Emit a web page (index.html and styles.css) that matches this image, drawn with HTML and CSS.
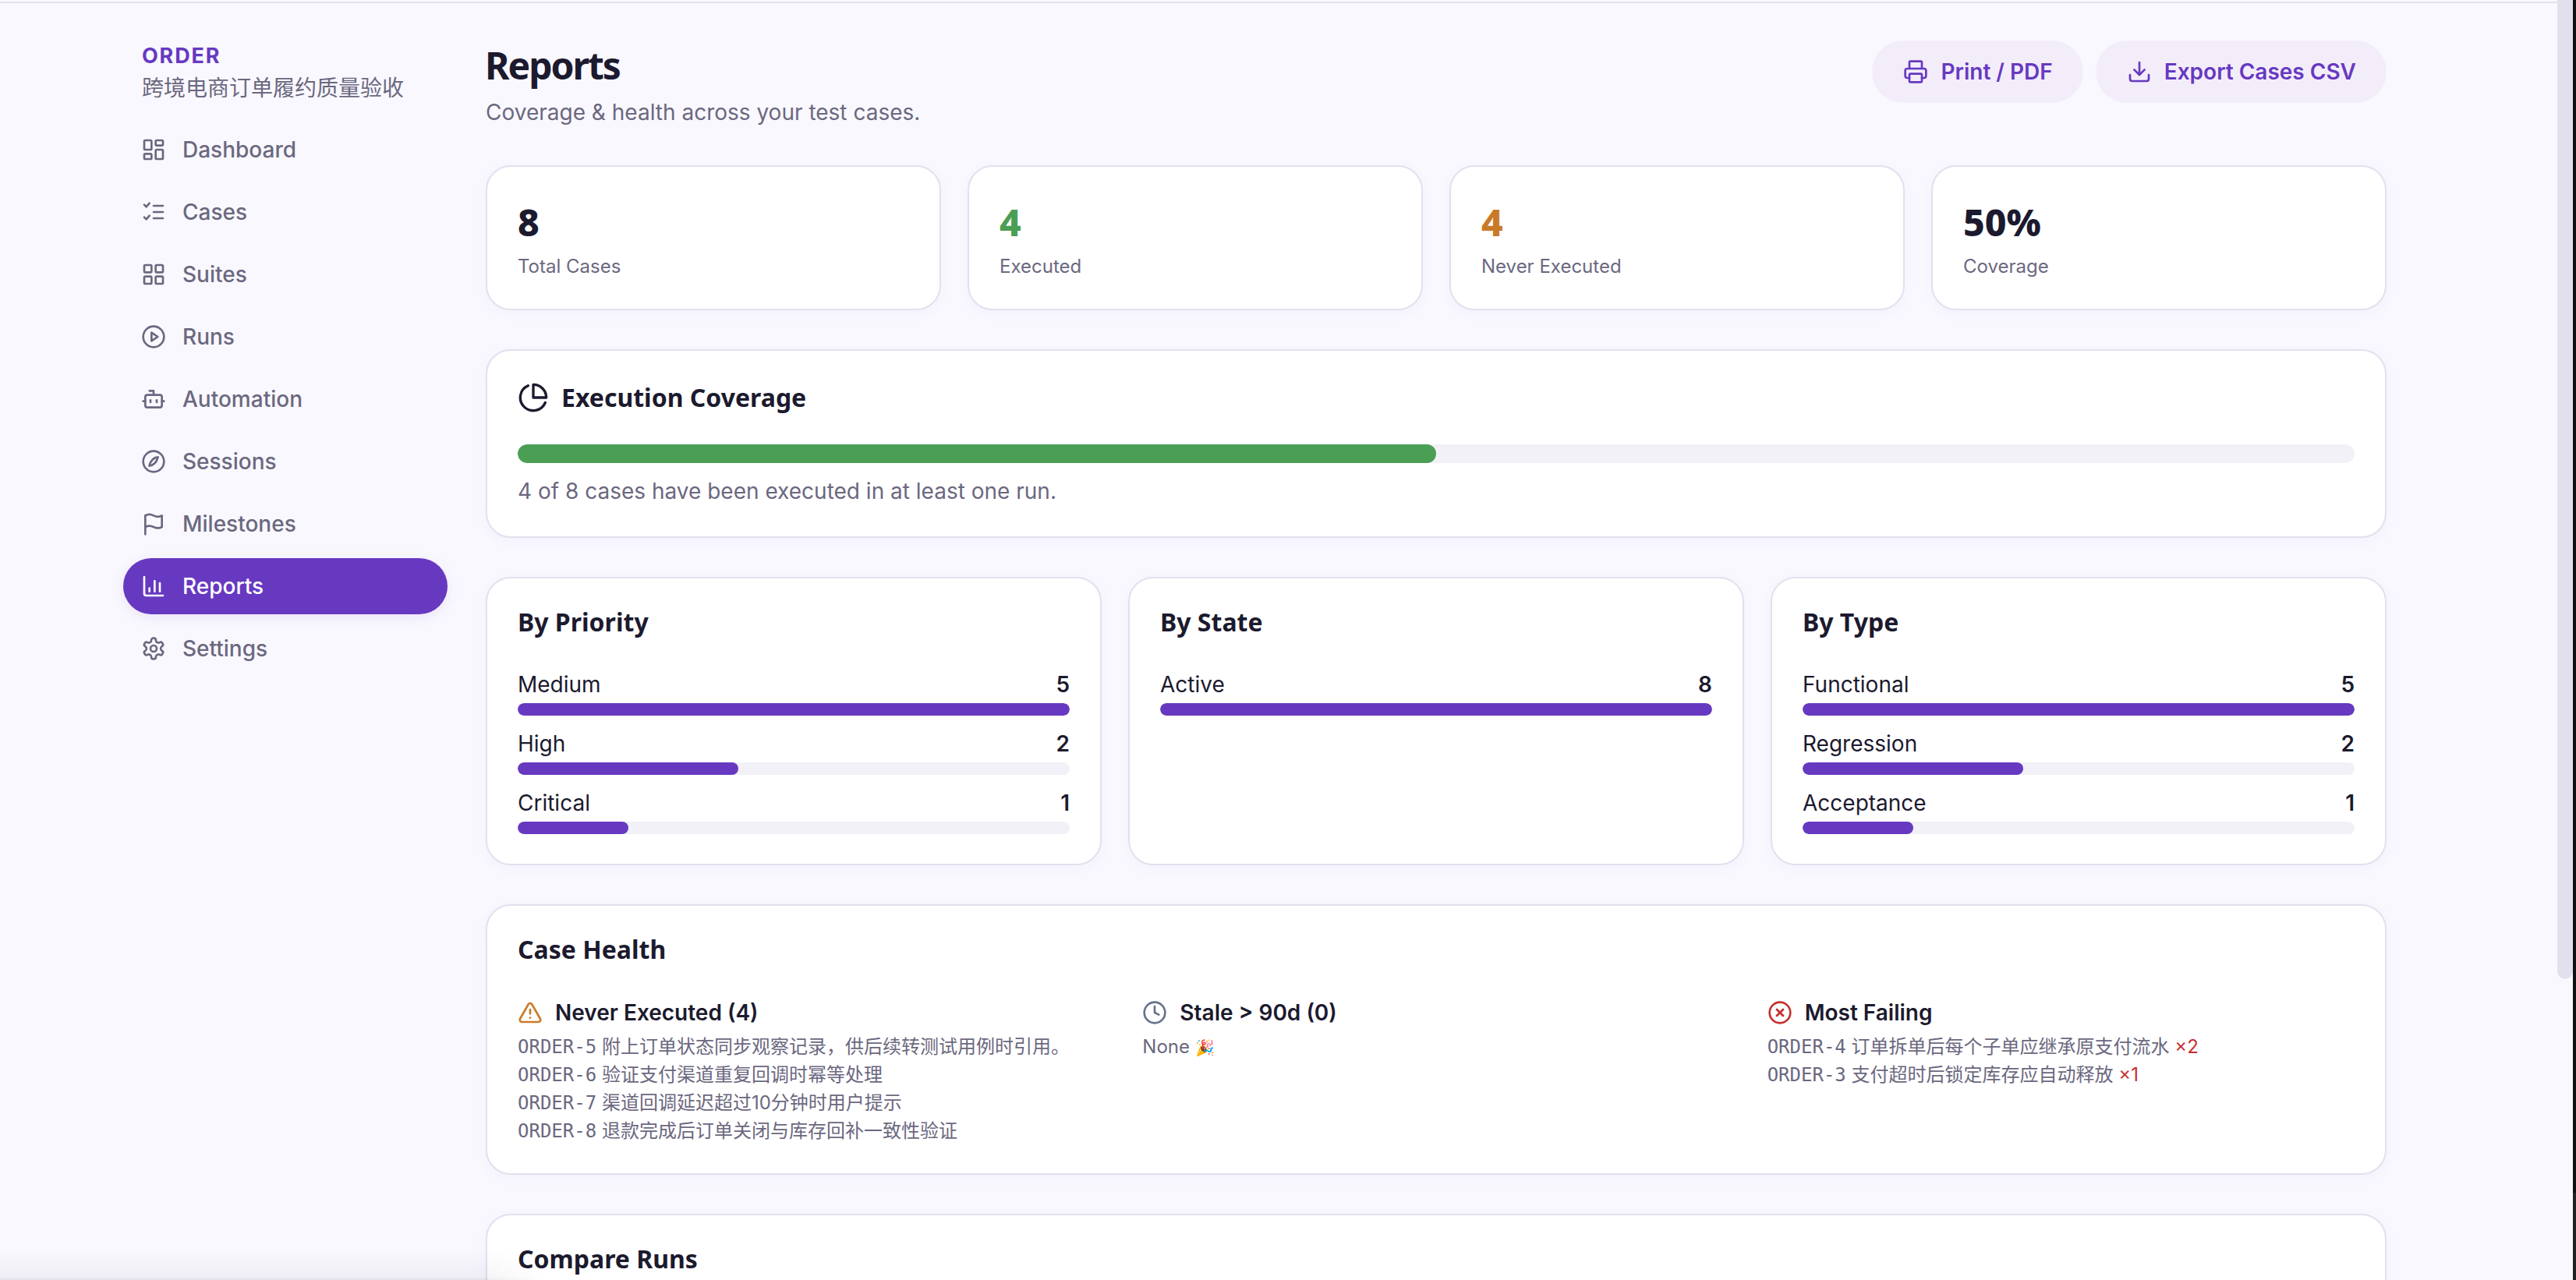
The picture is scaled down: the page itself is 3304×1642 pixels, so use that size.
FILE: index.html
```html
<!DOCTYPE html>
<html lang="en">
<head>
<meta charset="utf-8">
<title>Reports</title>
<link rel="stylesheet" href="styles.css">
</head>
<body>
<div class="app">
  <aside class="sidebar">
    <div class="brand">
      <div class="brand-key">ORDER</div>
      <div class="brand-name">跨境电商订单履约质量验收</div>
    </div>
    <nav class="nav">
      <a class="nav-item"><svg class="icon" viewBox="0 0 24 24"><rect x="3" y="3" width="7" height="9" rx="1"/><rect x="14" y="3" width="7" height="5" rx="1"/><rect x="14" y="12" width="7" height="9" rx="1"/><rect x="3" y="16" width="7" height="5" rx="1"/></svg>Dashboard</a>
      <a class="nav-item"><svg class="icon" viewBox="0 0 24 24"><path d="M3 5l2 2 3-3.500"/><path d="M3 17l2 2 3-3.500"/><path d="M12 6h9"/><path d="M12 12h9"/><path d="M12 18h9"/></svg>Cases</a>
      <a class="nav-item"><svg class="icon" viewBox="0 0 24 24"><rect x="3" y="3" width="7" height="7" rx="1"/><rect x="14" y="3" width="7" height="7" rx="1"/><rect x="14" y="14" width="7" height="7" rx="1"/><rect x="3" y="14" width="7" height="7" rx="1"/></svg>Suites</a>
      <a class="nav-item"><svg class="icon" viewBox="0 0 24 24"><circle cx="12" cy="12" r="10"/><path d="M10 8l6 4-6 4z"/></svg>Runs</a>
      <a class="nav-item"><svg class="icon" viewBox="0 0 24 24"><path d="M12 8V4H8"/><rect x="4" y="8" width="16" height="12" rx="2"/><path d="M2 14h2"/><path d="M20 14h2"/><path d="M15 13v2"/><path d="M9 13v2"/></svg>Automation</a>
      <a class="nav-item"><svg class="icon" viewBox="0 0 24 24"><circle cx="12" cy="12" r="10"/><path d="M16.200 7.800c-3.500.3-6.800 2.200-8.400 8.400 3.500-.3 6.800-2.200 8.400-8.400z"/></svg>Sessions</a>
      <a class="nav-item"><svg class="icon" viewBox="0 0 24 24"><path d="M4 22V4"/><path d="M4 4c2.500-1.500 5-1.500 8 0s5.500 1.500 8 0v11c-2.500 1.500-5 1.500-8 0s-5.500-1.500-8 0"/></svg>Milestones</a>
      <a class="nav-item is-active"><svg class="icon" viewBox="0 0 24 24"><path d="M3 3v16a2 2 0 0 0 2 2h16"/><path d="M8 17v-3"/><path d="M13 17V7"/><path d="M18 17v-8"/></svg>Reports</a>
      <a class="nav-item"><svg class="icon" viewBox="0 0 24 24"><path d="M12.220 2h-.44a2 2 0 0 0-2 2v.18a2 2 0 0 1-1 1.730l-.43.250a2 2 0 0 1-2 0l-.15-.08a2 2 0 0 0-2.730.730l-.22.380a2 2 0 0 0 .73 2.730l.15.100a2 2 0 0 1 1 1.720v.510a2 2 0 0 1-1 1.740l-.15.090a2 2 0 0 0-.73 2.730l.22.380a2 2 0 0 0 2.730.730l.15-.08a2 2 0 0 1 2 0l.43.250a2 2 0 0 1 1 1.730V20a2 2 0 0 0 2 2h.44a2 2 0 0 0 2-2v-.18a2 2 0 0 1 1-1.730l.43-.250a2 2 0 0 1 2 0l.15.080a2 2 0 0 0 2.730-.730l.22-.390a2 2 0 0 0-.73-2.730l-.15-.080a2 2 0 0 1-1-1.740v-.500a2 2 0 0 1 1-1.740l.15-.090a2 2 0 0 0 .73-2.730l-.22-.380a2 2 0 0 0-2.730-.730l-.15.080a2 2 0 0 1-2 0l-.43-.250a2 2 0 0 1-1-1.730V4a2 2 0 0 0-2-2z"/><circle cx="12" cy="12" r="3"/></svg>Settings</a>
    </nav>
  </aside>
  <main class="main">
    <header class="page-head">
      <div>
        <h1 class="page-title">Reports</h1>
        <p class="page-sub">Coverage &amp; health across your test cases.</p>
      </div>
      <div class="actions">
        <button class="btn"><svg class="icon" viewBox="0 0 24 24"><path d="M6 18H4a2 2 0 0 1-2-2v-5a2 2 0 0 1 2-2h16a2 2 0 0 1 2 2v5a2 2 0 0 1-2 2h-2"/><path d="M6 9V3a1 1 0 0 1 1-1h10a1 1 0 0 1 1 1v6"/><rect x="6" y="14" width="12" height="8" rx="1"/></svg>Print / PDF</button>
        <button class="btn"><svg class="icon" viewBox="0 0 24 24"><path d="M12 15V3"/><path d="M21 15v4a2 2 0 0 1-2 2H5a2 2 0 0 1-2-2v-4"/><path d="M7 10l5 5 5-5"/></svg>Export Cases CSV</button>
      </div>
    </header>

    <section class="stats">
      <div class="card stat"><div class="stat-value">8</div><div class="stat-label">Total Cases</div></div>
      <div class="card stat"><div class="stat-value is-green">4</div><div class="stat-label">Executed</div></div>
      <div class="card stat"><div class="stat-value is-orange">4</div><div class="stat-label">Never Executed</div></div>
      <div class="card stat"><div class="stat-value">50%</div><div class="stat-label">Coverage</div></div>
    </section>

    <section class="card panel">
      <h2 class="panel-title with-icon"><svg class="icon icon-title" viewBox="0 0 24 24"><path d="M21.210 15.890A10 10 0 1 1 8 2.830"/><path d="M22 12A10 10 0 0 0 12 2v10z"/></svg>Execution Coverage</h2>
      <div class="track track-lg"><div class="fill fill-green" style="width:50%"></div></div>
      <p class="note">4 of 8 cases have been executed in at least one run.</p>
    </section>

    <section class="breakdown">
      <div class="card panel">
        <h2 class="panel-title">By Priority</h2>
        <div class="bars">
          <div class="bar-row"><div class="bar-head"><span>Medium</span><strong>5</strong></div><div class="track"><div class="fill" style="width:100%"></div></div></div>
          <div class="bar-row"><div class="bar-head"><span>High</span><strong>2</strong></div><div class="track"><div class="fill" style="width:40%"></div></div></div>
          <div class="bar-row"><div class="bar-head"><span>Critical</span><strong>1</strong></div><div class="track"><div class="fill" style="width:20%"></div></div></div>
        </div>
      </div>
      <div class="card panel">
        <h2 class="panel-title">By State</h2>
        <div class="bars">
          <div class="bar-row"><div class="bar-head"><span>Active</span><strong>8</strong></div><div class="track"><div class="fill" style="width:100%"></div></div></div>
        </div>
      </div>
      <div class="card panel">
        <h2 class="panel-title">By Type</h2>
        <div class="bars">
          <div class="bar-row"><div class="bar-head"><span>Functional</span><strong>5</strong></div><div class="track"><div class="fill" style="width:100%"></div></div></div>
          <div class="bar-row"><div class="bar-head"><span>Regression</span><strong>2</strong></div><div class="track"><div class="fill" style="width:40%"></div></div></div>
          <div class="bar-row"><div class="bar-head"><span>Acceptance</span><strong>1</strong></div><div class="track"><div class="fill" style="width:20%"></div></div></div>
        </div>
      </div>
    </section>

    <section class="card panel panel-health">
      <h2 class="panel-title">Case Health</h2>
      <div class="health">
        <div>
          <h3 class="health-title"><svg class="icon icon-orange" viewBox="0 0 24 24"><path d="M21.730 18l-8-14a2 2 0 0 0-3.480 0l-8 14A2 2 0 0 0 4 21h16a2 2 0 0 0 1.730-3"/><path d="M12 9v4"/><path d="M12 17h.01"/></svg>Never Executed (4)</h3>
          <ul class="health-list">
            <li><span class="key">ORDER-5</span> 附上订单状态同步观察记录，供后续转测试用例时引用。</li>
            <li><span class="key">ORDER-6</span> 验证支付渠道重复回调时幂等处理</li>
            <li><span class="key">ORDER-7</span> 渠道回调延迟超过10分钟时用户提示</li>
            <li><span class="key">ORDER-8</span> 退款完成后订单关闭与库存回补一致性验证</li>
          </ul>
        </div>
        <div>
          <h3 class="health-title"><svg class="icon icon-slate" viewBox="0 0 24 24"><circle cx="12" cy="12" r="10"/><path d="M12 6v6l4 2"/></svg>Stale &gt; 90d (0)</h3>
          <ul class="health-list"><li>None <span class="emoji">🎉</span></li></ul>
        </div>
        <div>
          <h3 class="health-title"><svg class="icon icon-red" viewBox="0 0 24 24"><circle cx="12" cy="12" r="10"/><path d="M15 9l-6 6"/><path d="M9 9l6 6"/></svg>Most Failing</h3>
          <ul class="health-list">
            <li><span class="key">ORDER-4</span> 订单拆单后每个子单应继承原支付流水 <span class="fail">×2</span></li>
            <li><span class="key">ORDER-3</span> 支付超时后锁定库存应自动释放 <span class="fail">×1</span></li>
          </ul>
        </div>
      </div>
    </section>

    <section class="card panel">
      <h2 class="panel-title">Compare Runs</h2>
    </section>
  </main>
</div>
<div class="scroll-thumb"></div>
<div class="window-edge"></div>
<div class="bottom-fade"></div>
</body>
</html>
```

FILE: styles.css
```css
* { box-sizing: border-box; }

html {
  height: 100%;
  overflow: hidden;
  background: #f9f8fe;
}

body {
  margin: 2px 0 0;
  color: #1c1a2e;
  font-family: Inter, "Noto Sans CJK SC", sans-serif;
  font-size: 28px;
  border-top: 2px solid #e3e0ee;
}

.app {
  display: flex;
  align-items: flex-start;
  padding-left: 158px;
}

.sidebar {
  width: 416px;
  flex: none;
  padding-top: 52px;
}

.brand {
  padding-left: 24px;
  margin-bottom: 22px;
}

.brand-key {
  color: #6739c1;
  font-size: 27px;
  font-weight: 700;
  letter-spacing: 1.800px;
  line-height: 32px;
}

.brand-name {
  margin-top: 4px;
  color: #6b6880;
  font-size: 28px;
  line-height: 42px;
}

.nav {
  display: flex;
  flex-direction: column;
  gap: 8px;
}

.nav-item {
  display: flex;
  align-items: center;
  gap: 21px;
  height: 72px;
  padding-left: 23px;
  border-radius: 36px;
  color: #6b6880;
  font-weight: 500;
}

.nav-item.is-active {
  background: #6739c1;
  color: #fff;
  box-shadow: 0 4px 16px rgba(103, 57, 193, 0.1);
}

.icon {
  width: 32px;
  height: 32px;
  flex: none;
  fill: none;
  stroke: currentColor;
  stroke-width: 2;
  stroke-linecap: round;
  stroke-linejoin: round;
}

.icon-title { width: 40px; height: 40px; }
.icon-orange { color: #c97a28; }
.icon-slate { color: #64748b; }
.icon-red { color: #c62f2f; }

.main {
  width: 2438px;
  flex: none;
  margin-left: 49px;
  padding-top: 45px;
  display: flex;
  flex-direction: column;
  gap: 50px;
}

.page-head {
  display: flex;
  justify-content: space-between;
  align-items: flex-start;
}

.page-title {
  margin: 0 0 0 -1px;
  font-family: "Noto Sans", sans-serif;
  font-size: 48px;
  font-weight: 700;
  letter-spacing: -2px;
  line-height: 70px;
}

.page-sub {
  margin: 7px 0 0;
  color: #6b6880;
  font-size: 28px;
  line-height: 36px;
}

.actions {
  display: flex;
  gap: 16px;
  margin-top: 3px;
}

.btn {
  display: flex;
  align-items: center;
  gap: 16px;
  height: 80px;
  padding: 0 39px 0 40px;
  border: 0;
  border-radius: 40px;
  background: #f3edfa;
  color: #6739c1;
  font: 600 28px Inter, sans-serif;
}

.card {
  background: #fff;
  border: 2px solid #e3e0ee;
  border-radius: 32px;
  box-shadow: 0 4px 16px rgba(103, 57, 193, 0.04);
}

.stats {
  display: grid;
  grid-template-columns: repeat(4, 1fr);
  gap: 34px;
}

.stat {
  height: 186px;
  padding: 41px 39px 0;
}

.stat-value {
  font-family: "Noto Sans", sans-serif;
  font-size: 48px;
  font-weight: 800;
  line-height: 60px;
}

.stat-value.is-green { color: #4a9f55; }
.stat-value.is-orange { color: #c97a28; }

.stat-label {
  margin-top: 9px;
  color: #6b6880;
  font-size: 24px;
  line-height: 36px;
}

.panel { padding: 36px 39px 38px; }
.panel-health { padding-bottom: 36px; }

.panel-title {
  margin: 0;
  font-family: "Noto Sans", sans-serif;
  font-size: 32px;
  font-weight: 700;
  line-height: 40px;
}

.with-icon {
  display: flex;
  align-items: center;
  gap: 16px;
  padding-top: 4px;
}

.track {
  height: 16px;
  border-radius: 8px;
  background: #f2f1f7;
  overflow: hidden;
}

.track-lg {
  height: 24px;
  border-radius: 12px;
  margin-top: 40px;
}

.fill {
  height: 100%;
  border-radius: 8px;
  background: #6739c1;
}

.fill-green {
  background: #4a9f55;
  border-radius: 12px;
}

.note {
  margin: 16px 0 0;
  color: #6b6880;
  line-height: 40px;
}

.breakdown {
  display: grid;
  grid-template-columns: repeat(3, 1fr);
  gap: 34px;
}

.bars {
  display: flex;
  flex-direction: column;
  gap: 16px;
  margin-top: 40px;
}

.bar-head {
  display: flex;
  justify-content: space-between;
  line-height: 40px;
  margin-bottom: 4px;
}

.bar-head strong { font-weight: 600; }

.health {
  display: grid;
  grid-template-columns: repeat(3, 1fr);
  gap: 48px;
  margin-top: 41px;
}

.health-title {
  display: flex;
  align-items: center;
  gap: 16px;
  margin: 0 0 6px;
  font-size: 28px;
  font-weight: 600;
  line-height: 40px;
}

.health-list {
  margin: 0;
  padding: 0;
  list-style: none;
  color: #6b6880;
  font-size: 24px;
  line-height: 36px;
}

.key {
  font-family: "DejaVu Sans Mono", "Noto Sans CJK SC", monospace;
  font-size: 24px;
}

.emoji { font-size: 20px; }

.fail { color: #c62f2f; }

.scroll-thumb {
  position: absolute;
  top: 0;
  right: 4px;
  width: 20px;
  height: 1256px;
  background: #e3e0ee;
  border-radius: 0 0 10px 10px;
}

.window-edge {
  position: absolute;
  top: 0;
  right: 0;
  bottom: 0;
  width: 4px;
  background: linear-gradient(to bottom, #111 0, #111 1530px, #222 1530px);
}

.bottom-fade {
  position: absolute;
  left: 0;
  bottom: 0;
  width: 700px;
  height: 40px;
  background: linear-gradient(to bottom, rgba(90, 88, 110, 0), rgba(90, 88, 110, 0.06) 90%, rgba(90, 88, 110, 0.14));
  -webkit-mask-image: linear-gradient(to right, #000 88%, transparent);
  mask-image: linear-gradient(to right, #000 88%, transparent);
}
```
